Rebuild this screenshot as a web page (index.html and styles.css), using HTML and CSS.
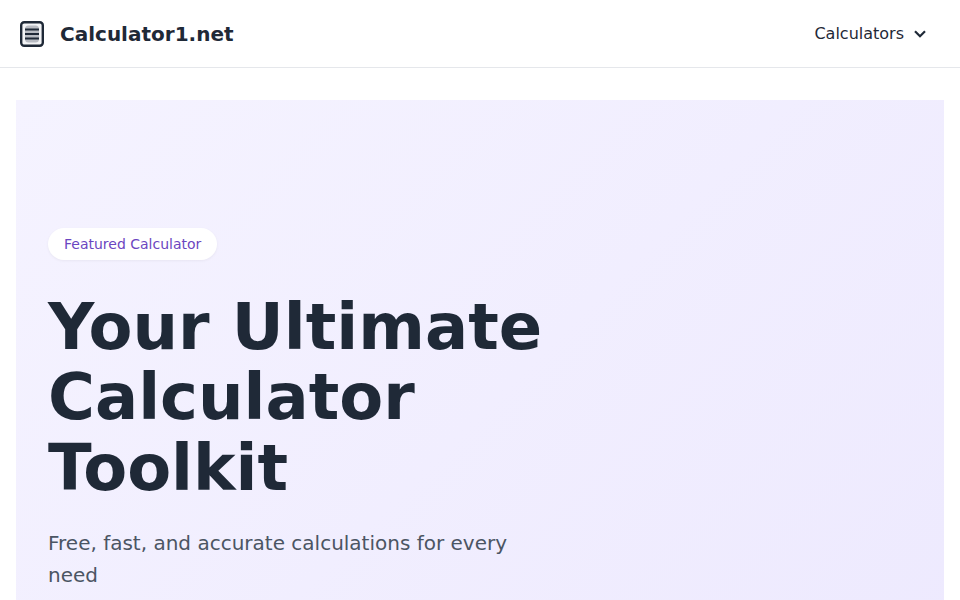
FILE: index.html
```html
<!DOCTYPE html>
<html lang="en">
<head>
    <meta charset="UTF-8">
    <meta name="viewport" content="width=device-width, initial-scale=1.0">
    <title>Calculator1.net</title>
    <link rel="stylesheet" href="styles.css">
</head>
<body>

    <header class="site-header">
        <a class="brand" href="#">
            <svg class="brand-icon" viewBox="0 0 24 26" width="24" height="26" aria-hidden="true">
                <rect x="1.2" y="1.2" width="21.6" height="23.6" rx="3" fill="#f3f4f6" stroke="#1f2937" stroke-width="2.4"/>
                <rect x="5" y="4.5" width="14" height="17" rx="3.5" fill="#b9bcc3"/>
                <path d="M5 8.5h14M5 13h14M5 17.5h14" stroke="#1f2937" stroke-width="2.2" fill="none"/>
            </svg>
            <span class="brand-name">Calculator1.net</span>
        </a>
        <button class="nav-toggle" type="button">
            Calculators
            <svg viewBox="0 0 12 8" width="12" height="8" aria-hidden="true">
                <path d="M1 1.2 6 6.2l5-5" stroke="#1f2937" stroke-width="2.2" fill="none"/>
            </svg>
        </button>
    </header>

    <main class="page">
        <section class="hero">
            <span class="hero-badge">Featured Calculator</span>
            <h1 class="hero-title">Your Ultimate Calculator Toolkit</h1>
            <p class="hero-text">Free, fast, and accurate calculations for every need</p>
        </section>
    </main>

</body>
</html>
```

FILE: styles.css
```css
body {
    margin: 0;
    background-color: white;
    color: #1f2937;
    font-family: "DejaVu Sans", sans-serif;
}

.site-header {
    display: flex;
    justify-content: space-between;
    align-items: center;
    height: 67px;
    padding: 0 34px 0 20px;
    border-bottom: 1px solid #e5e7eb;
}

.brand {
    display: flex;
    align-items: center;
    gap: 16px;
    color: #1f2937;
    text-decoration: none;
}

.brand-name {
    font-size: 20px;
    font-weight: 700;
}

.nav-toggle {
    display: flex;
    align-items: center;
    gap: 10px;
    padding: 0;
    border: 0;
    background: none;
    color: #1f2937;
    font: inherit;
    font-size: 16px;
}

.page {
    padding: 32px 16px 16px;
}

.hero {
    padding: 128px 32px;
    background: linear-gradient(135deg, #f5f3ff, #ede9fe);
}

.hero-badge {
    display: inline-block;
    padding: 8px 16px;
    border-radius: 16px;
    background-color: white;
    box-shadow: 0 1px 3px rgba(0, 0, 0, 0.05);
    color: #6b46c1;
    font-size: 14px;
    line-height: 16px;
}

.hero-title {
    max-width: 512px;
    margin: 32px 0 24px;
    font-size: 64px;
    font-weight: 700;
    line-height: 1.1;
}

.hero-text {
    max-width: 512px;
    margin: 0;
    color: #4b5563;
    font-size: 20px;
    line-height: 32px;
}
```
